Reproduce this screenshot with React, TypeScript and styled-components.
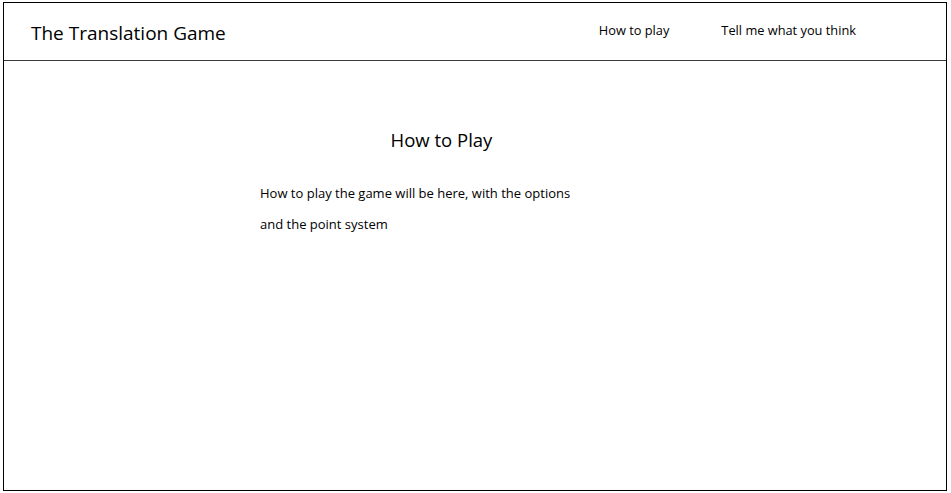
import React from "react";
import styled, { createGlobalStyle } from "styled-components";

const Global = createGlobalStyle`
  html, body { margin: 0; padding: 0; background: #fff; }
  body { font-family: "Open Sans", "DejaVu Sans", sans-serif; color: #000; }
`;

const Frame = styled.div`
  box-sizing: border-box;
  margin: 2px 0 0 3px;
  width: 944px;
  height: 489px;
  border: 1px solid #000;
  display: flex;
  flex-direction: column;
`;

const Header = styled.header`
  box-sizing: border-box;
  height: 58px;
  border-bottom: 1px solid #3a3a3a;
  display: flex;
  align-items: center;
  padding: 2px 0 0 27px;
`;

const Title = styled.h1`
  margin: 0;
  font-size: 19px;
  font-weight: 400;
  flex: 1;
`;

const Nav = styled.nav`
  display: flex;
  gap: 52px;
  margin-right: 90px;
  padding-bottom: 6px;
`;

const NavLink = styled.a`
  font-size: 12.8px;
  color: #000;
  text-decoration: none;
  cursor: pointer;
`;

const Main = styled.main`
  padding: 66px 0 0 256px;
`;

const Column = styled.section`
  width: 363px;
`;

const Heading = styled.h2`
  margin: 0 0 25px;
  font-size: 18.5px;
  font-weight: 400;
  text-align: center;
  line-height: 26px;
`;

const Body = styled.p`
  margin: 0;
  font-size: 13px;
  line-height: 31px;
`;

export default function App() {
  return (
    <>
      <Global />
      <Frame>
        <Header>
          <Title>The Translation Game</Title>
          <Nav>
            <NavLink>How to play</NavLink>
            <NavLink>Tell me what you think</NavLink>
          </Nav>
        </Header>
        <Main>
          <Column>
            <Heading>How to Play</Heading>
            <Body>
              How to play the game will be here, with the options
              <br />
              and the point system
            </Body>
          </Column>
        </Main>
      </Frame>
    </>
  );
}
